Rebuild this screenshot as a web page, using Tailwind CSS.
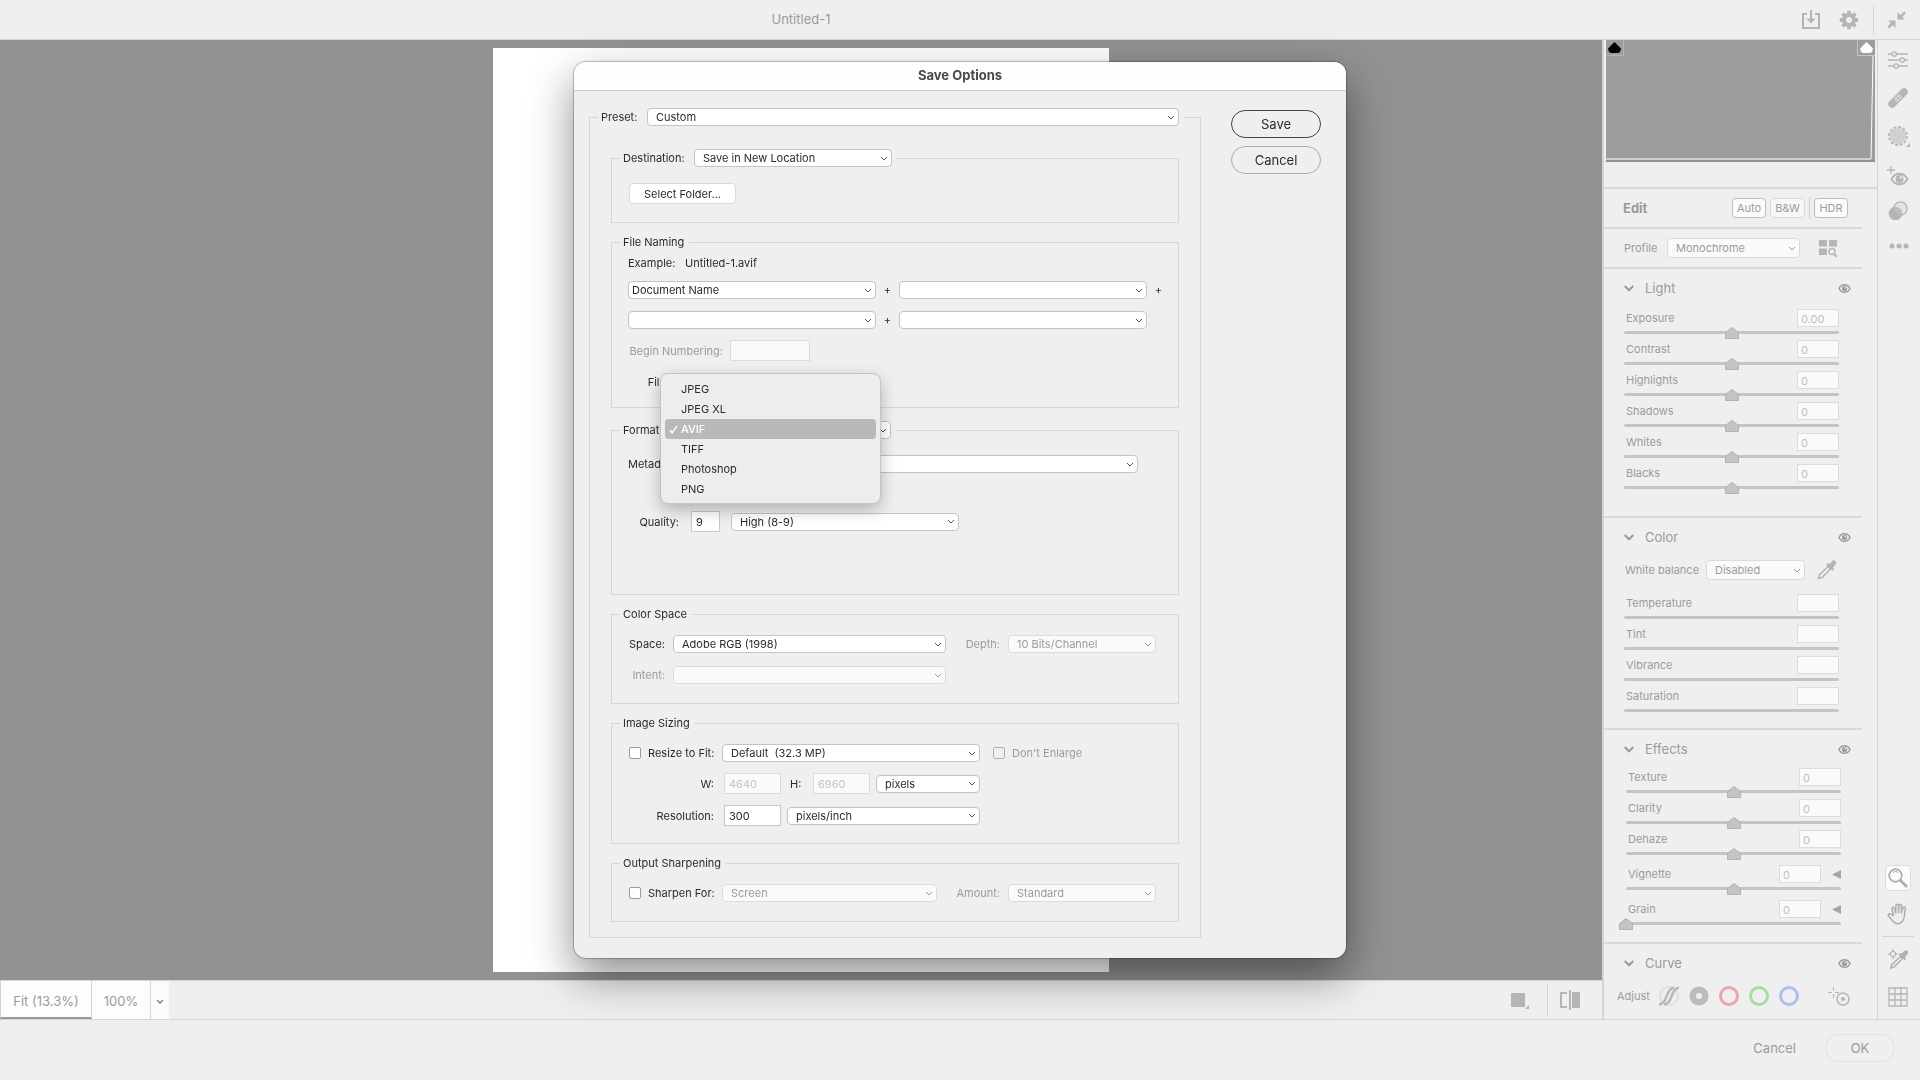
<!DOCTYPE html>
<html lang="en">
<head>
    <meta charset="UTF-8">
    <meta name="viewport" content="width=device-width, initial-scale=1.0">
    <title>Save Options</title>
    <script src="https://cdn.jsdelivr.net/npm/@tailwindcss/browser@4"></script>
    <style>
        select {
            appearance: none;
            background-image: url("data:image/svg+xml,%3Csvg xmlns='http://www.w3.org/2000/svg' width='8' height='5'%3E%3Cpath d='M1 1l3 3 3-3' fill='none' stroke='%23555'/%3E%3C/svg%3E");
            background-repeat: no-repeat;
            background-position: right 3px center;
        }
        select:disabled {
            opacity: 1;
            background-image: url("data:image/svg+xml,%3Csvg xmlns='http://www.w3.org/2000/svg' width='8' height='5'%3E%3Cpath d='M1 1l3 3 3-3' fill='none' stroke='%23999'/%3E%3C/svg%3E");
        }
        input[type=range] { appearance: none; background: transparent; }
        input[type=range]::-webkit-slider-thumb {
            appearance: none;
            width: 14px;
            height: 12px;
            background: url("data:image/svg+xml,%3Csvg xmlns='http://www.w3.org/2000/svg' width='14' height='12'%3E%3Cpath d='M.5 11.5V5.500L7 .5l6.500 5v6z' fill='%23c4c4c4' stroke='%23b2b2b2'/%3E%3C/svg%3E") no-repeat;
        }
    </style>
</head>
<body class="flex h-screen flex-col overflow-hidden bg-[#efefef] font-[Inter,sans-serif] text-[11px] leading-4 text-[#9b9b9b]">

    <!-- title bar -->
    <header class="flex h-10 shrink-0 items-center border-b border-[#d4d4d4]">
        <h1 class="flex-1 pb-px text-center text-[13px]">Untitled-1</h1>
        <div class="flex h-full w-[318px] items-center justify-end">
            <button aria-label="Save image" class="mr-[18px]">
                <svg class="size-5" viewBox="0 0 20 20" fill="none" stroke="#b5b5b5" stroke-width="2"><path d="M6 4H2v14h16V4h-4"/><path d="M10 0v11"/><path d="M5.500 8.500h9L10 13.500z" fill="#b5b5b5" stroke="none"/></svg>
            </button>
            <button aria-label="Preferences" class="mr-[14px]">
                <svg class="size-5" viewBox="0 0 20 20"><g fill="#b5b5b5"><path fill-rule="evenodd" d="M10 3.200a6.800 6.800 0 1 0 0 13.600 6.800 6.800 0 0 0 0-13.600zM10 7a3 3 0 1 1 0 6 3 3 0 0 1 0-6z"/><path d="M8.300.8h3.400l.5 3.200H7.800zM8.300 19.200h3.400l.5-3.200H7.800zM.8 8.300v3.400l3.200.5V7.800zM19.200 8.300v3.400l-3.200.5V7.800zM2.300 4.700l2.400-2.400 2.600 1.900-3.100 3.100zM17.700 4.700l-2.400-2.400-2.600 1.900 3.100 3.100zM2.300 15.300l2.400 2.400 2.600-1.900-3.100-3.100zM17.700 15.300l-2.400 2.400-2.600-1.900 3.100-3.100z"/></g></svg>
            </button>
            <div class="h-[30px] w-px bg-[#d4d4d4]"></div>
            <button aria-label="Exit full screen" class="mr-[13px] ml-[13px]">
                <svg class="size-5" viewBox="0 0 20 20" fill="#b5b5b5"><path d="M10.500 2v7.500H18l-2.800-2.700L19 3.200 17.200 1.300l-3.800 3.600zM8.500 18v-7.500H1l2.700 2.700L.5 16.500l1.900 1.900 3.300-3.200z"/></svg>
            </button>
        </div>
    </header>

    <div class="flex min-h-0 flex-1">
        <!-- canvas -->
        <main class="flex min-w-0 flex-1 flex-col">
            <div class="flex flex-1 justify-center bg-[#929292] py-2">
                <div class="w-[616px] bg-white"></div>
            </div>
            <div class="flex h-[39px] shrink-0 border-t border-[#d4d4d4] text-[13px]">
                <button class="w-[92px] border-r border-b-2 border-l border-r-[#d4d4d4] border-b-[#999] border-l-[#d4d4d4] bg-[#fdfdfd] pt-1">Fit (13.3%)</button>
                <button class="w-[59px] border-r border-[#d4d4d4] bg-[#fdfdfd] pt-0.5">100%</button>
                <button aria-label="Zoom levels" class="flex w-[18px] items-center justify-center bg-[#fbfbfb] pt-0.5">
                    <svg class="h-[5px] w-2" viewBox="0 0 8 5" fill="none" stroke="#777" stroke-width="1.300"><path d="M1 1l3 3 3-3"/></svg>
                </button>
                <div class="ml-auto flex items-center">
                    <button aria-label="Background" class="mr-[18px]">
                        <svg class="size-[18px]" viewBox="0 0 18 18" fill="#b5b5b5"><path d="M0 2h14v14H0zM18 14v4h-4z"/></svg>
                    </button>
                    <div class="h-8 w-px bg-[#d4d4d4]"></div>
                    <button aria-label="Compare" class="mr-[22px] ml-3">
                        <svg class="h-5 w-5" viewBox="0 0 20 20"><path d="M7 3H1v14h6" fill="none" stroke="#b5b5b5" stroke-width="2"/><path d="M9 0h2v20H9zM12 2h8v16h-8z" fill="#b5b5b5"/></svg>
                    </button>
                </div>
            </div>
        </main>

        <!-- adjustments -->
        <aside class="flex w-[275px] shrink-0 flex-col border-l-2 border-[#d4d4d4]">
            <div class="h-[149px] shrink-0 border-b-2 border-[#d8d8d8] pr-0.5 pl-0.5">
                <div class="relative h-[122px] border-b-2 border-[#929292] bg-[#9d9d9d]">
                    <svg class="absolute inset-0 size-full" viewBox="0 0 269 120" preserveAspectRatio="none" fill="none" stroke="#fff"><path d="M0 119h265l2-103"/></svg>
                    <button aria-label="Shadow clipping" class="absolute top-0 left-0 flex h-4 w-[18px] items-center justify-center border-r border-b border-[#b5b5b5]">
                        <svg class="h-[11px] w-[13px]" viewBox="0 0 13 11"><path d="M6.500 0L13 6.500 12 10l-2 1H3l-2-1-1-3.500z" fill="#000"/></svg>
                    </button>
                    <button aria-label="Highlight clipping" class="absolute top-0 right-0 flex h-4 w-[18px] items-center justify-center border-b border-l border-[#c5c5c5]">
                        <svg class="h-[11px] w-[13px]" viewBox="0 0 13 11"><path d="M6.500 0L13 6.500 12 10l-2 1H3l-2-1-1-3.500z" fill="#fff"/></svg>
                    </button>
                </div>
            </div>
            <div class="flex min-h-0 flex-1 flex-col pr-[15px]">
                <div class="flex h-10 shrink-0 items-center border-b-2 border-[#d8d8d8] pr-[14px] pl-[19px]">
                    <h2 class="flex-1 text-[13px] font-bold">Edit</h2>
                    <button class="h-5 w-[34px] rounded-sm border border-[#bdbdbd] bg-[#fbfbfb]">Auto</button>
                    <button class="ml-1 h-5 w-[35px] rounded-sm border border-[#d8d8d8] bg-[#f7f7f7]">B&amp;W</button>
                    <div class="mx-1 h-[22px] w-px bg-[#cfcfcf]"></div>
                    <button class="h-5 w-[34px] rounded-sm border border-[#bdbdbd] bg-[#fbfbfb]">HDR</button>
                </div>
                <div class="flex h-10 shrink-0 items-center border-b-2 border-[#d8d8d8] pl-5">
                    <label for="profile" class="w-[43px]">Profile</label>
                    <select id="profile" disabled class="h-5 w-[133px] rounded-sm border border-[#dadada] bg-[#fafafa] pl-2"><option>Monochrome</option></select>
                    <button aria-label="Browse profiles" class="ml-[19px]">
                        <svg class="h-[17px] w-[18px]" viewBox="0 0 18 17" fill="#b5b5b5"><path d="M0 0h8v6.500H0zM10 0h8v6.500h-8zM0 8.500h8V15H0z"/><circle cx="13" cy="11.500" r="3" fill="none" stroke="#b5b5b5" stroke-width="1.500"/><path d="M15 14l3 3" stroke="#b5b5b5" stroke-width="2"/></svg>
                    </button>
                </div>

                <section class="h-[249px] shrink-0 border-b-2 border-[#d8d8d8]">
                    <div data-head="Light" class="mb-0.5 flex h-[38px] items-center pr-[11px] pl-5"></div>
                    <div data-rows="light" class="pr-[23px] pl-5"></div>
                </section>

                <section class="h-[212px] shrink-0 border-b-2 border-[#d8d8d8]">
                    <div data-head="Color" class="mb-0.5 flex h-[38px] items-center pr-[11px] pl-5"></div>
                    <div class="mb-3 flex h-6 items-center pl-[21px]">
                        <label for="wb" class="w-[81px]">White balance</label>
                        <select id="wb" disabled class="h-5 w-[99px] rounded-sm border border-[#dadada] bg-[#fafafa] pl-2"><option>Disabled</option></select>
                        <button aria-label="White balance picker" class="ml-3">
                            <svg class="size-5" viewBox="0 0 20 20"><path d="M11 6.500l2.500 2.500-8.500 8.500-3.500 1 .8-3.500z" fill="none" stroke="#b5b5b5" stroke-width="1.500"/><path d="M9 4.500l1.500-1.500 2 1L15 1.200c2.500-2.500 5.500 1 3.600 3.200L16 7.500l1 2-1.500 1.500z" fill="#b5b5b5"/></svg>
                        </button>
                    </div>
                    <div data-rows="color" class="pr-[23px] pl-5"></div>
                </section>

                <section class="h-[214px] shrink-0 border-b-2 border-[#d8d8d8]">
                    <div data-head="Effects" class="flex h-[38px] items-center pr-[11px] pl-5"></div>
                    <div data-rows="effects" class="pr-[21px] pl-[22px]"></div>
                </section>

                <section class="shrink-0">
                    <div data-head="Curve" class="flex h-[38px] items-center pr-[11px] pl-5"></div>
                    <div class="flex h-7 items-center pr-3 pl-[13px]">
                        <span class="w-[42px]">Adjust</span>
                        <button aria-label="Parametric curve" class="mr-2.5"><svg class="size-5" viewBox="0 0 20 20" fill="none"><circle cx="10" cy="10" r="9" stroke="#dedede" stroke-width="2"/><path d="M0 18.500C9 18 6 3 15 1.500M5 18.500C14 18 11 3 20 1.500" stroke="#b8b8b8" stroke-width="2.500"/></svg></button>
                        <button aria-label="Point curve" class="mr-2.5"><svg class="size-5" viewBox="0 0 20 20"><circle cx="10" cy="10" r="6.300" fill="none" stroke="#bcbcbc" stroke-width="6.500"/></svg></button>
                        <button aria-label="Red channel" class="mr-2.5 size-5 rounded-full border-3 border-[#efa3a8]"></button>
                        <button aria-label="Green channel" class="mr-2.5 size-5 rounded-full border-3 border-[#a9dba9]"></button>
                        <button aria-label="Blue channel" class="size-5 rounded-full border-3 border-[#a9c0ee]"></button>
                        <button aria-label="Targeted adjustment" class="ml-auto">
                            <svg class="h-5 w-[22px]" viewBox="0 0 22 20" fill="none" stroke="#b5b5b5"><path d="M0 6.500h4M7 6.500h4M5.500 1v4M5.500 8v4" /><circle cx="15" cy="13" r="6" stroke-width="1.500"/><circle cx="15" cy="13" r="2" fill="#b5b5b5" stroke="none"/></svg>
                        </button>
                    </div>
                </section>
            </div>
        </aside>

        <!-- tools -->
        <nav class="flex w-[43px] shrink-0 flex-col items-center border-l border-[#d4d4d4] pt-[10px] pr-0.5 pb-3">
            <button aria-label="Edit" class="mb-[18px]">
                <svg class="size-5" viewBox="0 0 20 20" fill="none" stroke="#b5b5b5" stroke-width="1.300"><path d="M0 4h4M8.500 4H20M0 10h12M16.500 10H20M0 16h6M10.500 16H20"/><circle cx="6.200" cy="4" r="2.200"/><circle cx="14.200" cy="10" r="2.200"/><circle cx="8.200" cy="16" r="2.200"/></svg>
            </button>
            <button aria-label="Heal" class="mb-[18px]">
                <svg class="size-5" viewBox="0 0 20 20"><path d="M4 16L16 4" stroke="#b5b5b5" stroke-width="7.500" stroke-linecap="round"/><path d="M6 10.500l3.500 3.500M10.500 6l3.500 3.500" stroke="#e2e2e2"/><g fill="#efefef"><circle cx="10" cy="8" r=".9"/><circle cx="12" cy="10" r=".9"/><circle cx="8" cy="10" r=".9"/><circle cx="10" cy="12" r=".9"/></g></svg>
            </button>
            <button aria-label="Masking" class="mb-[18px] pl-0.5">
                <svg class="h-[22px] w-[22px]" viewBox="0 0 22 22"><circle cx="10" cy="10" r="8" fill="#d0d0d0"/><circle cx="10" cy="10" r="9" fill="none" stroke="#b5b5b5" stroke-width="1.800" stroke-dasharray="3 1.700"/><path d="M22 17v4h-4z" fill="#b5b5b5"/></svg>
            </button>
            <button aria-label="Red eye" class="mb-[15px]">
                <svg class="h-5 w-[22px]" viewBox="0 0 22 20"><path d="M4 0v8M0 4h8" stroke="#b5b5b5" stroke-width="1.300"/><path d="M4.500 13c3.500-7 12.500-7 16 0-3.500 7-12.500 7-16 0z" fill="none" stroke="#b5b5b5" stroke-width="1.800"/><circle cx="12.500" cy="13" r="4" fill="#b5b5b5"/><circle cx="14" cy="11.500" r="1.300" fill="#efefef"/></svg>
            </button>
            <button aria-label="Presets" class="mb-[22px]">
                <svg class="size-5" viewBox="0 0 20 20"><circle cx="7.500" cy="12.500" r="6.800" fill="#b5b5b5"/><circle cx="12.500" cy="7.500" r="6.600" fill="#cdcdcd" fill-opacity=".35" stroke="#b5b5b5" stroke-width="1.300"/></svg>
            </button>
            <button aria-label="More" class="pl-0.5">
                <svg class="h-1.5 w-5" viewBox="0 0 20 6" fill="#b5b5b5"><circle cx="3" cy="3" r="2.500"/><circle cx="10" cy="3" r="2.500"/><circle cx="17" cy="3" r="2.500"/></svg>
            </button>
            <button aria-label="Zoom" class="mt-auto mb-3 flex size-[26px] items-center justify-center rounded-sm border border-[#dcdcdc] bg-[#fbfbfb]">
                <svg class="size-5" viewBox="0 0 20 20" fill="none" stroke="#adadad"><circle cx="7.500" cy="7.500" r="6.300" stroke-width="1.700"/><path d="M5 4.500c1.500-1.500 4-1.300 5.200.2" stroke-width="1"/><path d="M12 12l7 7" stroke-width="2.600"/></svg>
            </button>
            <button aria-label="Hand" class="mb-[11px]">
                <svg class="h-[22px] w-[22px]" viewBox="0 0 22 22" fill="none" stroke="#b0b0b0" stroke-width="1.500" stroke-linejoin="round" stroke-linecap="round"><path d="M6.500 12.500L5 6c-.3-2 2-2.400 2.500-.6L8.800 10V2.800c0-2 2.700-2 2.700 0V9.500l.5-6.700c.2-1.900 2.700-1.700 2.600.2L14.300 10l1.600-5c.6-1.800 2.900-1.100 2.500.7-1.500 5 0 7-2 11-1.500 3-3.200 4-5.400 4-3 0-4.500-1.500-6-3.700L1.500 13c-1-2 1-3 2.500-1.700z"/></svg>
            </button>
            <div class="mb-3 h-px w-8 bg-[#d4d4d4]"></div>
            <button aria-label="Color sampler" class="mb-[18px]">
                <svg class="h-5 w-[21px]" viewBox="0 0 21 20"><g fill="none" stroke="#b0b0b0"><circle cx="5" cy="5" r="2.800"/><path d="M5 0v3.500M5 6.500V10M0 5h3.500M6.500 5H10"/><path d="M12.500 7.500l2 2L6 18l-3.200 1 .7-3z" stroke-width="1.500"/></g><path d="M10.500 5.500l1.500-1.500 1.500.8L16 2c2.500-2.500 5.800 1 3.600 3.200L17 8l1 1.800-1.500 1.400z" fill="#b0b0b0"/></svg>
            </button>
            <button aria-label="Grid">
                <svg class="size-5" viewBox="0 0 20 20" fill="none" stroke="#b5b5b5" stroke-width="1.300"><path d="M1 1h18v18H1zM7 1v18M13 1v18M1 7h18M1 13h18"/></svg>
            </button>
        </nav>
    </div>

    <footer class="flex h-[61px] shrink-0 items-center justify-end border-t border-[#d4d4d4] pr-[25px] pb-1 text-[13px]">
        <button class="mr-[29px]">Cancel</button>
        <button class="h-7 w-[70px] rounded-full border border-[#e0e0e0]">OK</button>
    </footer>

    <!-- dialog -->
    <div class="fixed inset-0 flex items-start justify-center pt-[62px]">
        <div role="dialog" aria-labelledby="dlg-title" class="w-[772px] rounded-xl bg-[#efefef] text-[#2b2b2b] shadow-[0_0_1px_1px_rgba(0,0,0,0.25),0_18px_45px_rgba(0,0,0,0.45)]">
            <h2 id="dlg-title" class="h-[29px] rounded-t-xl border-b border-[#cbcbcb] bg-[#fdfdfd] text-center text-[13px] leading-[27px] font-bold text-[#4a4a4a]">Save Options</h2>
            <form class="flex items-start pt-[17px] pr-[25px] pb-5 pl-[15px] [&_fieldset]:min-w-0 [&_fieldset]:border [&_fieldset]:border-[#d6d6d6] [&_fieldset_fieldset>div]:pl-4 [&_input[type=text]]:h-[21px] [&_input[type=text]]:border [&_input[type=text]]:border-[#c8c8c8] [&_input[type=text]]:bg-white [&_input[type=text]]:px-1 [&_input[type=text]:disabled]:border-[#dcdcdc] [&_input[type=text]:disabled]:bg-[#fafafa] [&_input[type=text]:disabled]:text-[#c4c4c4] [&_legend]:ml-2 [&_legend]:flex [&_legend]:h-[18px] [&_legend]:items-center [&_legend]:pr-[5px] [&_legend]:pl-[3px] [&_select]:h-[18px] [&_select]:shrink-0 [&_select]:rounded-sm [&_select]:border [&_select]:border-[#c4c4c4] [&_select]:bg-white [&_select:disabled]:border-[#dcdcdc] [&_select:disabled]:bg-[#fafafa] [&_select:disabled]:text-[#9b9b9b]">
                <fieldset class="w-[612px]">
                    <legend>
                        <label for="preset" class="w-[46px]">Preset:</label>
                        <select id="preset" class="w-[532px] pl-2"><option>Custom</option></select>
                    </legend>
                    <div class="flex flex-col gap-2.5 px-[21px] pt-[23px] pb-[15px]">

                        <fieldset class="pt-4 pb-[18px]">
                            <legend>
                                <label for="dest" class="w-[71px]">Destination:</label>
                                <select id="dest" class="w-[198px] pl-2"><option>Save in New Location</option></select>
                            </legend>
                            <div>
                                <button type="button" class="ml-px block h-[21px] w-[107px] rounded-sm border border-[#dadada] bg-white">Select Folder...</button>
                            </div>
                        </fieldset>

                        <fieldset class="pt-1 pb-[15px]">
                            <legend>File Naming</legend>
                            <div class="flex"><span class="w-[57px]">Example:</span><span>Untitled-1.avif</span></div>
                            <div class="mt-2.5 flex items-center">
                                <select aria-label="Name part 1" class="w-[248px] pl-[3px]"><option>Document Name</option></select>
                                <span class="w-[23px] text-center">+</span>
                                <select aria-label="Name part 2" class="w-[248px] pl-[3px]"><option></option></select>
                                <span class="w-[23px] text-center">+</span>
                            </div>
                            <div class="mt-3 flex items-center">
                                <select aria-label="Name part 3" class="w-[248px] pl-[3px]"><option></option></select>
                                <span class="w-[23px] text-center">+</span>
                                <select aria-label="Name part 4" class="w-[248px] pl-[3px]"><option></option></select>
                            </div>
                            <div class="mt-[11px] flex items-center">
                                <label for="begin" class="w-[95px] text-right text-[#9b9b9b]">Begin Numbering:</label>
                                <input id="begin" type="text" disabled class="ml-[7px] w-20">
                            </div>
                            <div class="mt-2.5 flex h-[21px] items-center">
                                <label for="ext" class="w-[95px] text-right">File Extension:</label>
                                <select id="ext" class="ml-2 w-[79px] pl-2"><option>.avif</option></select>
                            </div>
                        </fieldset>

                        <fieldset class="mt-[3px] pt-4 pb-[62px]">
                            <legend>
                                <label for="format" class="w-[50px]">Format:</label>
                                <span class="relative flex">
                                    <select id="format" class="w-[218px] pl-2"><option>AVIF</option></select>
                                    <!-- open format menu -->
                                    <ul role="listbox" aria-label="Format" class="absolute -top-12 -left-[13px] z-10 w-[221px] rounded-lg border border-[#c4c4c4] bg-[#ededed] px-1 pt-[5px] pb-1 shadow-[0_6px_16px_rgba(0,0,0,0.25)]">
                                        <li><button type="button" role="option" class="block h-5 w-full pl-4 text-left">JPEG</button></li>
                                        <li><button type="button" role="option" class="block h-5 w-full pl-4 text-left">JPEG XL</button></li>
                                        <li><button type="button" role="option" aria-selected="true" class="flex h-5 w-full items-center rounded bg-[#b9b9b9] pl-1 text-left font-medium text-white"><svg class="mr-[3px] h-[9px] w-[9px]" viewBox="0 0 9 9" fill="none" stroke="#fff" stroke-width="1.400"><path d="M1 5l2.200 3L8 .8"/></svg>AVIF</button></li>
                                        <li><button type="button" role="option" class="block h-5 w-full pl-4 text-left">TIFF</button></li>
                                        <li><button type="button" role="option" class="block h-5 w-full pl-4 text-left">Photoshop</button></li>
                                        <li><button type="button" role="option" class="block h-5 w-full pl-4 text-left">PNG</button></li>
                                    </ul>
                                </span>
                            </legend>
                            <div class="flex items-center">
                                <label for="meta" class="w-[60px]">Metadata:</label>
                                <select id="meta" class="w-[450px] pl-2"><option></option></select>
                            </div>
                            <div class="mt-[38px] flex items-center">
                                <label for="quality" class="w-[51px] text-right">Quality:</label>
                                <input id="quality" type="text" value="9" class="ml-3 w-[29px]">
                                <select aria-label="Quality range" class="ml-[11px] w-[228px] pl-2"><option>High (8-9)</option></select>
                            </div>
                        </fieldset>

                        <fieldset class="pt-3 pb-[19px]">
                            <legend>Color Space</legend>
                            <div class="flex items-center">
                                <label for="space" class="w-[37px] text-right">Space:</label>
                                <select id="space" class="ml-2 w-[273px] pl-2"><option>Adobe RGB (1998)</option></select>
                                <label for="depth" class="ml-[10px] w-[44px] text-right text-[#9b9b9b]">Depth:</label>
                                <select id="depth" disabled class="ml-2 w-[148px] pl-2"><option>10 Bits/Channel</option></select>
                            </div>
                            <div class="mt-[13px] flex items-center">
                                <label for="intent" class="w-[37px] text-right text-[#9b9b9b]">Intent:</label>
                                <select id="intent" disabled class="ml-2 w-[273px] pl-2"><option></option></select>
                            </div>
                        </fieldset>

                        <fieldset class="pt-3 pb-[17px]">
                            <legend>Image Sizing</legend>
                            <div class="flex items-center">
                                <input id="resize" type="checkbox" class="ml-px size-3 appearance-none rounded-xs border border-[#9a9a9a] bg-white">
                                <label for="resize" class="ml-[7px] w-[74px]">Resize to Fit:</label>
                                <select aria-label="Fit to" class="w-[258px] pl-2"><option>Default&nbsp; (32.3 MP)</option></select>
                                <input id="enlarge" type="checkbox" disabled class="ml-[13px] size-3 appearance-none rounded-xs border border-[#b0b0b0]">
                                <label for="enlarge" class="ml-[7px] text-[#9b9b9b]">Don't Enlarge</label>
                            </div>
                            <div class="mt-[11px] flex items-center">
                                <label for="w" class="w-[86px] text-right">W:</label>
                                <input id="w" type="text" disabled value="4640" class="ml-2.5 w-[57px]">
                                <label for="h" class="ml-[9px] w-[23px]">H:</label>
                                <input id="h" type="text" disabled value="6960" class="w-[57px]">
                                <select aria-label="Size unit" class="ml-[6px] w-[104px] pl-2"><option>pixels</option></select>
                            </div>
                            <div class="mt-[11px] flex items-center">
                                <label for="res" class="w-[86px] text-right">Resolution:</label>
                                <input id="res" type="text" value="300" class="ml-2.5 w-[57px]">
                                <select aria-label="Resolution unit" class="ml-[6px] w-[193px] pl-2"><option>pixels/inch</option></select>
                            </div>
                        </fieldset>

                        <fieldset class="pt-3 pb-[19px]">
                            <legend>Output Sharpening</legend>
                            <div class="flex items-center">
                                <input id="sharpen" type="checkbox" class="ml-px size-3 appearance-none rounded-xs border border-[#9a9a9a] bg-white">
                                <label for="sharpen" class="ml-[7px] w-[74px]">Sharpen For:</label>
                                <select aria-label="Sharpen for" disabled class="w-[215px] pl-2"><option>Screen</option></select>
                                <label for="amount" class="ml-2.5 w-[53px] text-right text-[#9b9b9b]">Amount:</label>
                                <select id="amount" disabled class="ml-2 w-[148px] pl-2"><option>Standard</option></select>
                            </div>
                        </fieldset>
                    </div>
                </fieldset>
                <div class="ml-auto flex flex-col gap-2 pt-0.5 text-[13px]">
                    <button type="submit" class="h-7 w-[90px] rounded-full border border-[#444] pb-px">Save</button>
                    <button type="button" class="h-7 w-[90px] rounded-full border border-[#aaa] pb-px">Cancel</button>
                </div>
            </form>
        </div>
    </div>

    <script>
        const groups = {
            light: [
                { name: 'Exposure', value: '0.00' },
                { name: 'Contrast', value: '0' },
                { name: 'Highlights', value: '0' },
                { name: 'Shadows', value: '0' },
                { name: 'Whites', value: '0' },
                { name: 'Blacks', value: '0' },
            ],
            color: [
                { name: 'Temperature', value: '' },
                { name: 'Tint', value: '' },
                { name: 'Vibrance', value: '' },
                { name: 'Saturation', value: '' },
            ],
            effects: [
                { name: 'Texture', value: '0' },
                { name: 'Clarity', value: '0' },
                { name: 'Dehaze', value: '0' },
                { name: 'Vignette', value: '0', more: true },
                { name: 'Grain', value: '0', more: true, pos: 0 },
            ],
        };

        function head(title) {
            return `
                <svg class="h-[7px] w-2.5" viewBox="0 0 10 7" fill="none" stroke="#9b9b9b" stroke-width="2"><path d="M.7 1L5 5.300 9.300 1"/></svg>
                <h3 class="ml-[11px] flex-1 text-[13px]">${title}</h3>
                <button aria-label="Toggle ${title}">
                    <svg class="h-[9px] w-[13px]" viewBox="0 0 13 9"><path d="M1 4.500c2.500-5 8.500-5 11 0-2.500 5-8.500 5-11 0z" fill="none" stroke="#9b9b9b" stroke-width="1.500"/><circle cx="6.500" cy="4.500" r="2.600" fill="#9b9b9b"/><circle cx="7.300" cy="3.700" r=".8" fill="#efefef"/></svg>
                </button>`;
        }

        function row(s) {
            const id = s.name.toLowerCase();
            return `
                <div class="${s.more ? 'h-[31px] mt-1' : 'h-[31px]'}">
                    <div class="flex h-[18px] items-center">
                        <label for="${id}" class="flex-1 pl-0.5">${s.name}</label>
                        <input id="${id}" type="text" value="${s.value}" class="h-[18px] w-[42px] border border-[#dcdcdc] bg-[#fafafa] pt-0.5 pl-[3px] text-[#c0c0c0]">
                        ${s.more ? `<button aria-label="${s.name} options" class="ml-[11px]"><svg class="size-[9px]" viewBox="0 0 9 9"><path d="M9 0v9L0 4.500z" fill="#a5a5a5"/></svg></button>` : ''}
                    </div>
                    <div class="relative mt-1 h-[3px] rounded-full bg-[#c4c4c4]">
                        <input type="range" aria-label="${s.name}" value="${s.pos ?? 50}" class="${s.value ? 'absolute -inset-x-[7px] -top-1 h-3' : 'absolute inset-x-0 -top-1 h-3 opacity-0'}">
                    </div>
                </div>`;
        }

        document.querySelectorAll('[data-head]').forEach(el => {
            el.innerHTML = head(el.dataset.head);
        });
        document.querySelectorAll('[data-rows]').forEach(el => {
            el.innerHTML = groups[el.dataset.rows].map(row).join('');
        });
    </script>
</body>
</html>
